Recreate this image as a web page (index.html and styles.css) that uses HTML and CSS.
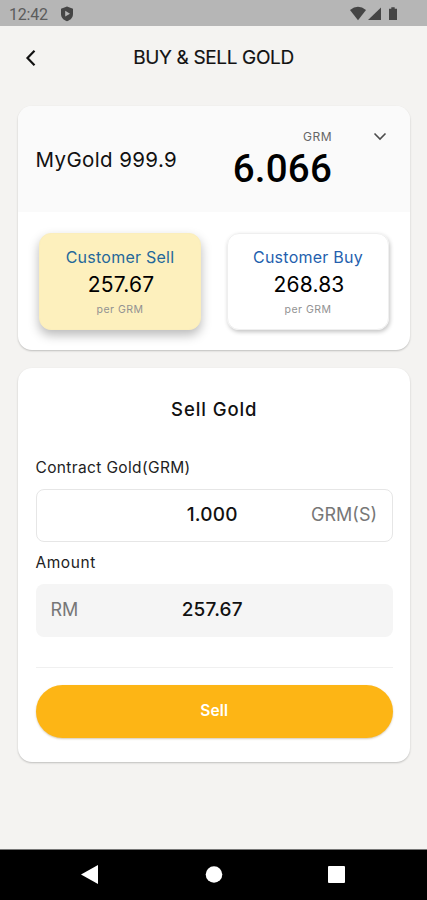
FILE: index.html
```html
<!DOCTYPE html>
<html lang="en">
<head>
<meta charset="utf-8">
<title>Buy &amp; Sell Gold</title>
<link rel="stylesheet" href="styles.css">
</head>
<body>
<div class="status">
  <span class="time">12:42</span>
  <svg class="shield" width="14" height="16" viewBox="0 0 14 16"><path d="M7 .6 13 2.8V8c0 3.600-2.500 6.100-6 7.200C3.500 14.100 1 11.600 1 8V2.800z" fill="#454545"/><path d="M5.200 4.800v5.800L10 7.700z" fill="#b5b5b5"/></svg>
  <svg class="signals" width="50" height="16" viewBox="0 0 50 16" fill="#454545"><path d="M0 4Q8-2.500 16 4L8 14.300z"/><path d="M31 1.500V14H18z"/><path d="M41.300 1.200h3.400v1.500H47V14h-8V2.700h2.300z"/></svg>
</div>
<header class="appbar">
  <svg class="back" width="12" height="18" viewBox="0 0 12 18"><path d="M9.500 1.800 2.500 9l7 7.200" fill="none" stroke="#111" stroke-width="2.200"/></svg>
  <h1>BUY &amp; SELL GOLD</h1>
</header>
<main>
  <section class="card rates">
    <div class="balance">
      <div class="product">MyGold 999.9</div>
      <div class="holding"><div class="unit">GRM</div><div class="weight">6.066</div></div>
      <svg class="chevron" width="14" height="9" viewBox="0 0 14 9"><path d="M1.500 1.500 7 7l5.500-5.500" fill="none" stroke="#4c4c4c" stroke-width="1.600"/></svg>
    </div>
    <div class="options">
      <div class="option selected"><div class="name">Customer Sell</div><div class="price">257.67</div><div class="per">per GRM</div></div>
      <div class="option"><div class="name">Customer Buy</div><div class="price">268.83</div><div class="per">per GRM</div></div>
    </div>
  </section>
  <section class="card form">
    <h2>Sell Gold</h2>
    <div class="label contract">Contract Gold(GRM)</div>
    <div class="field outlined"><span></span><span class="value qty">1.000</span><span class="suffix">GRM(S)</span></div>
    <div class="label amount">Amount</div>
    <div class="field filled"><span class="prefix">RM</span><span class="value total">257.67</span><span></span></div>
    <hr>
    <div class="sell">Sell</div>
  </section>
</main>
<nav>
  <svg width="427" height="50" viewBox="0 0 427 50" fill="#fff"><path d="M81 24.500 98 15v19z"/><circle cx="214" cy="24.500" r="8.300"/><rect x="328" y="16" width="17" height="17" rx="1"/></svg>
</nav>
</body>
</html>
```
FILE: styles.css
```css
* { box-sizing: border-box; }
body { margin: 0; height: 900px; display: flex; flex-direction: column; background: #f4f3f1; color: #111; font-family: Inter, "Liberation Sans", sans-serif; overflow: hidden; }
svg { display: block; flex: none; }
.status { height: 26px; background: #b6b6b6; display: flex; align-items: center; padding: 2px 27px 0 9px; }
.time { font: 16px/20px Roboto, sans-serif; color: #5c5c5c; width: 51px; letter-spacing: -.2px; padding-top: 1px; }
.signals { margin-left: auto; }
.appbar { height: 62px; display: grid; grid-template-columns: 25px 1fr 25px; align-items: center; padding: 2px 25px 0; }
h1, h2 { margin: 0; }
h1 { font-size: 19px; line-height: 24px; font-weight: 400; text-align: center; letter-spacing: -.35px; -webkit-text-stroke: .15px #111; }
main { flex: 1; padding: 18px 17px 0 18px; }
.card { background: #fff; border-radius: 14px; box-shadow: 0 1px 2px rgba(0,0,0,.22); }
.rates { height: 244px; }
.balance { height: 106px; background: #fafafa; border-radius: 14px 14px 0 0; display: flex; padding: 0 23px 0 17.500px; }
.product { font-size: 20.500px; line-height: 26px; padding-top: 41px; letter-spacing: .38px; }
.holding { margin-left: auto; text-align: right; padding-top: 22px; }
.unit { font-size: 12px; line-height: 18px; color: #666; letter-spacing: .5px; }
.weight { font: 500 38.500px/44px Roboto, sans-serif; letter-spacing: .2px; padding-top: 1px; color: #000; }
.chevron { margin: 26px 0 0 41px; }
.options { display: grid; grid-template-columns: 162px 162px; gap: 26px; padding: 21px 0 0 21px; }
.option { height: 97px; border-radius: 12px; text-align: center; padding-top: 12.500px; border: 1px solid #efefef; box-shadow: 1px 2px 4px rgba(0,0,0,.24); }
.selected { background: #fdf0bd; border-color: #fbeebc; box-shadow: 0 5px 11px rgba(0,0,0,.28); }
.name { font-size: 16px; line-height: 20px; color: #245fae; letter-spacing: .25px; }
.selected .name { color: #24689a; }
.price { font-size: 21px; line-height: 26px; margin-top: 5px; padding-left: 2px; color: #000; letter-spacing: .2px; }
.per { font-size: 10.500px; line-height: 14px; margin-top: 5px; color: #929292; letter-spacing: .5px; }
.form { height: 394px; margin-top: 18px; padding: 28px 17px 0 17.500px; }
h2 { font-size: 18.500px; line-height: 26px; font-weight: 500; text-align: center; letter-spacing: .9px; }
.label { font-size: 15.500px; line-height: 20px; color: #222; letter-spacing: .36px; }
.contract { margin-top: 36px; }
.amount { margin-top: 11px; letter-spacing: .55px; }
.field { height: 53px; margin-top: 11px; border-radius: 8px; display: grid; grid-template-columns: 1fr auto 1fr; align-items: center; padding: 0 15px 2px; }
.outlined { border: 1px solid #e6e6e6; }
.filled { background: #f5f5f5; }
.value { font-size: 19px; font-weight: 500; padding-right: 4px; letter-spacing: .2px; }
.prefix, .suffix { font-size: 18px; color: #777; }
.suffix { text-align: right; }
hr { border: 0; height: 1px; background: #f0f0f0; margin: 30px 0 17px; }
.sell { height: 53px; border-radius: 27px; background: #fdb515; box-shadow: 0 1px 2px rgba(120,80,0,.3); color: #fff; font-size: 15.500px; font-weight: 600; line-height: 52px; text-align: center; letter-spacing: .1px; }
nav { height: 51px; background: #000; border-top: 1px solid #777; }
```
